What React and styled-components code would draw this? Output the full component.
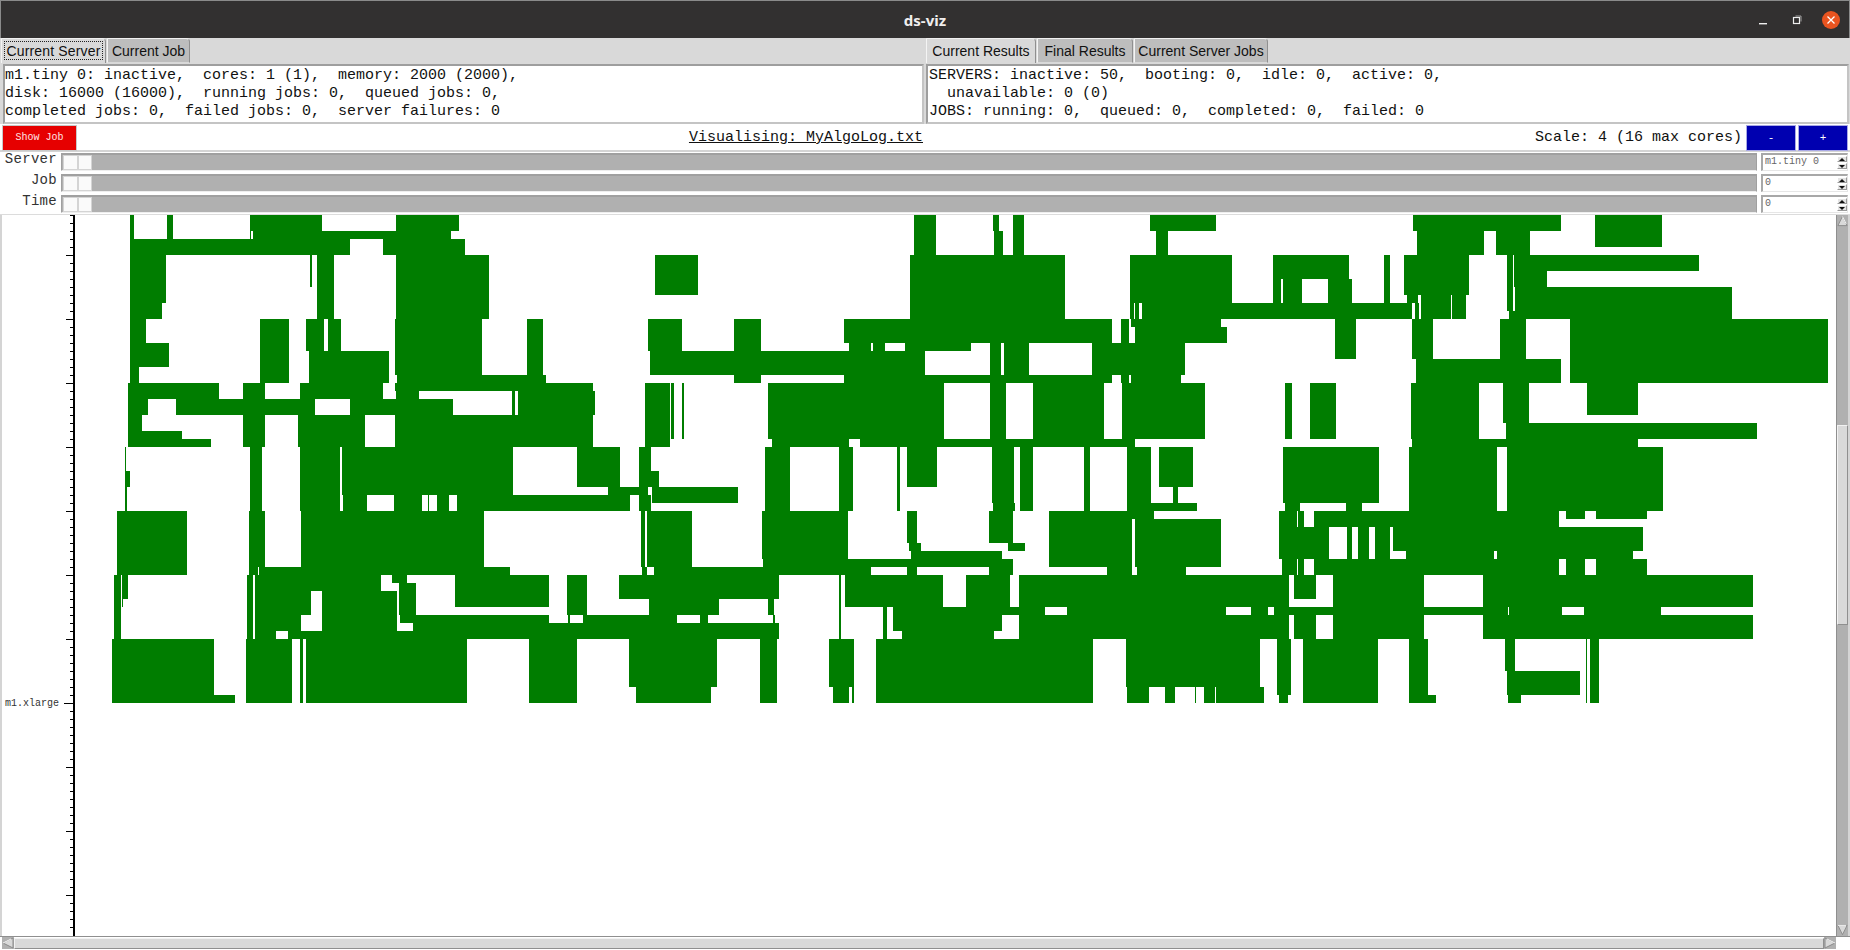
import React from "react";
import styled, { createGlobalStyle } from "styled-components";

const MONO = '"Liberation Mono", monospace';

// job blocks: [first row, last row, x1, x2, x1, x2, ...]
// a row is 8px high, x is measured on a strip 1568 units wide that covers 620px of the page
const STRIP_WIDTH = 620;
const STRIP_UNITS = 1568;
const ROW_H = 8;
const CHART_TOP = 215;

const STRIPS = [
  {
    left: 0,
    bands: [
      [0, 3, 329, 339, 422, 438],
      [0, 2, 632, 814, 1001, 1161],
      [2, 3, 632, 636, 641, 1141],
      [3, 5, 329, 885, 969, 1176],
      [5, 11, 329, 420],
      [5, 9, 785, 789],
      [5, 13, 802, 845, 1001, 1237],
      [11, 13, 329, 410],
      [13, 16, 329, 369],
      [16, 19, 329, 427],
      [19, 21, 329, 352],
      [13, 21, 658, 731],
      [13, 17, 774, 819, 830, 862],
      [17, 21, 781, 984],
      [13, 20, 999, 1219, 1333, 1373],
      [20, 21, 1004, 1381],
      [21, 23, 324, 554, 615, 670, 759, 969],
      [21, 22, 999, 1500],
      [22, 23, 1001, 1060],
      [22, 25, 1296, 1302, 1310, 1505],
      [23, 25, 324, 374, 445, 797, 885, 1146],
      [25, 27, 324, 359],
      [27, 28, 324, 460],
      [28, 29, 324, 534],
      [25, 29, 615, 670, 754, 923, 999, 1500],
      [29, 32, 316, 319],
      [32, 34, 316, 329],
      [34, 37, 316, 321],
      [29, 37, 632, 663, 759, 860],
      [29, 35, 865, 1297],
      [29, 34, 1459, 1568],
      [34, 35, 1538, 1568],
      [35, 37, 867, 928, 996, 1067, 1082, 1085, 1105, 1136, 1156, 1568],
      [37, 45, 296, 473],
      [37, 44, 630, 670, 761, 1224],
      [44, 45, 630, 652, 655, 1290],
      [45, 53, 288, 306, 625, 640],
      [45, 48, 309, 324, 1565, 1568],
      [48, 49, 309, 311],
      [45, 47, 645, 964],
      [45, 46, 991, 1029],
      [46, 50, 1009, 1052],
      [47, 50, 645, 787, 814, 1004],
      [50, 52, 645, 761, 814, 1004],
      [52, 53, 645, 698, 728, 1568],
      [45, 49, 1151, 1388],
      [45, 50, 1434, 1485],
      [50, 51, 1012, 1388, 1436, 1442, 1474, 1568],
      [51, 52, 1044, 1568],
      [53, 61, 283, 541, 622, 738, 759, 766, 774, 1181, 1338, 1459],
      [60, 61, 541, 594],
    ],
  },
  {
    left: 610,
    bands: [
      [0, 5, 769, 824, 1019, 1047],
      [0, 2, 969, 984, 1366, 1533],
      [2, 5, 971, 994, 1381, 1411],
      [5, 10, 114, 223],
      [5, 13, 759, 1151],
      [5, 11, 1315, 1568],
      [11, 13, 1315, 1325, 1328, 1337, 1345, 1568],
      [13, 16, 592, 1270, 1292, 1313],
      [13, 14, 1318, 1545],
      [14, 16, 1328, 1560],
      [13, 17, 96, 182, 314, 382],
      [16, 17, 604, 660, 665, 695, 746, 913],
      [16, 20, 961, 990, 996, 1060, 1219, 1454],
      [17, 20, 101, 797],
      [20, 21, 314, 382, 592, 1270, 1292, 1313, 1318, 1444],
      [21, 28, 154, 162, 182, 187, 400, 845, 961, 1001, 1070, 1249, 1295, 1505],
      [21, 29, 89, 152],
      [28, 29, 410, 604, 632, 1328],
      [29, 34, 0, 25, 751, 827, 1388, 1474],
      [29, 32, 73, 104],
      [32, 34, 73, 124],
      [34, 35, 0, 96],
      [34, 36, 106, 324, 1424, 1436],
      [35, 37, 0, 51, 73, 104],
      [29, 37, 392, 455, 579, 615, 726, 733, 1037, 1070, 1199, 1214],
      [29, 36, 966, 1022, 1308, 1368],
      [36, 37, 969, 1024, 1308, 1485],
      [37, 44, 78, 89, 94, 207],
      [44, 45, 81, 94, 111, 660, 751, 776, 959, 1019, 1257, 1320, 1333, 1457],
      [37, 43, 384, 602],
      [43, 44, 387, 1019],
      [37, 41, 751, 776, 959, 1019],
      [41, 42, 756, 787, 1007, 1050],
      [42, 43, 761, 991],
      [37, 38, 1110, 1376],
      [38, 44, 1110, 1320, 1328, 1545],
      [45, 48, 23, 427],
      [48, 50, 99, 276, 400, 415],
      [50, 51, 0, 169, 228, 248, 413, 417],
      [51, 53, 0, 427],
      [45, 53, 579, 584],
      [45, 49, 594, 842, 900, 1012, 1034, 1568],
      [49, 50, 716, 1100, 1156, 1558],
      [49, 53, 690, 701],
      [50, 52, 716, 991],
      [52, 53, 738, 971],
      [50, 53, 1034, 1568],
      [53, 59, 48, 271, 554, 617, 1305, 1568],
      [59, 61, 66, 255, 564, 604, 612, 617, 1308, 1363, 1404, 1429, 1479, 1482, 1502, 1530, 1533, 1568],
      [53, 61, 379, 422, 673, 1222],
    ],
  },
  {
    left: 1230,
    bands: [
      [0, 2, 463, 837],
      [0, 4, 923, 1093],
      [2, 5, 473, 642, 673, 759],
      [5, 11, 0, 5, 389, 405],
      [5, 8, 109, 301],
      [8, 11, 109, 130, 133, 182, 248, 309],
      [11, 13, 0, 460, 468, 479, 482, 560, 562, 597],
      [5, 10, 440, 604],
      [10, 11, 448, 475, 482, 560, 562, 597],
      [5, 12, 701, 716],
      [5, 7, 718, 1186],
      [7, 9, 718, 802],
      [9, 13, 721, 1270],
      [12, 13, 706, 721],
      [13, 18, 266, 319, 460, 513, 683, 749],
      [13, 21, 860, 1512],
      [18, 21, 470, 837],
      [21, 25, 903, 1032],
      [21, 28, 139, 157, 202, 268, 458, 630],
      [21, 26, 690, 756],
      [26, 28, 698, 1333],
      [28, 29, 460, 1032],
      [29, 36, 134, 377],
      [29, 37, 453, 675, 701, 1095],
      [36, 37, 139, 177, 293, 334],
      [37, 39, 124, 170, 173, 187, 212, 832],
      [37, 38, 850, 898, 926, 1055],
      [39, 43, 124, 250, 296, 309, 324, 352, 367, 405],
      [39, 42, 412, 1044],
      [42, 43, 445, 668, 675, 1019],
      [43, 45, 132, 170, 173, 187, 212, 832, 850, 898, 926, 1055],
      [45, 49, 0, 149, 260, 491, 640, 1323],
      [45, 48, 162, 217],
      [49, 50, 53, 96, 111, 702, 705, 840, 895, 1090],
      [50, 53, 0, 149, 162, 217, 260, 491, 640, 1323],
      [53, 59, 0, 76],
      [59, 61, 0, 86],
      [53, 60, 119, 154],
      [60, 61, 124, 147, 453, 521, 703, 736],
      [53, 61, 185, 374, 453, 501, 900, 903, 910, 933],
      [53, 57, 695, 721],
      [57, 60, 701, 885],
    ],
  },
];

const blocks = STRIPS.flatMap(({ left, bands }) =>
  bands.flatMap(([from, to, ...xs]) => {
    const out = [];
    for (let i = 0; i < xs.length; i += 2) {
      const x1 = Math.round(left + (xs[i] * STRIP_WIDTH) / STRIP_UNITS);
      const x2 = Math.round(left + (xs[i + 1] * STRIP_WIDTH) / STRIP_UNITS);
      out.push({
        x: x1,
        y: CHART_TOP + from * ROW_H,
        width: Math.max(x2 - x1, 1),
        height: (to - from) * ROW_H,
      });
    }
    return out;
  })
);

const ticks = Array.from({ length: 90 }, (_, i) => CHART_TOP + i * ROW_H);

const GlobalStyle = createGlobalStyle`
  html, body {
    margin: 0;
    padding: 0;
    height: 100%;
    overflow: hidden;
    background: #d9d9d9;
  }
  * {
    box-sizing: border-box;
  }
`;

const Window = styled.div`
  width: 1850px;
  height: 950px;
  display: flex;
  flex-direction: column;
  background: #ececec;
`;

const TitleBar = styled.div`
  height: 38px;
  flex: none;
  display: grid;
  grid-template-columns: 1fr auto 1fr;
  align-items: center;
  background: #323030;
  border-top: 1px solid #8a8a8a;
  border-left: 1px solid #8a8a8a;
  border-right: 1px solid #8a8a8a;
`;

const Title = styled.div`
  grid-column: 2;
  font: bold 15px "Noto Sans", "Open Sans", sans-serif;
  color: #f0eeee;
`;

const WindowButtons = styled.div`
  grid-column: 3;
  justify-self: end;
  display: flex;
  padding-right: 1px;
`;

const WindowButton = styled.div`
  width: 34px;
  height: 20px;
  display: flex;
  align-items: center;
  justify-content: center;
`;

const Tabbed = styled.div`
  display: grid;
  grid-template-columns: 925px 925px;
  flex: none;
  background: #d9d9d9;
`;

const TabColumn = styled.div`
  display: flex;
  flex-direction: column;
  padding-left: 1px;
`;

const TabRow = styled.div`
  height: 25px;
  display: flex;
  align-items: flex-end;
  gap: 1px;
`;

const Tab = styled.div`
  width: ${(p) => p.$w}px;
  height: 25px;
  display: flex;
  align-items: center;
  justify-content: center;
  font: 14px "Liberation Sans", Arial, sans-serif;
  letter-spacing: ${(p) => (p.$focus ? "0.15px" : "0")};
  color: #111;
  white-space: nowrap;
  background: ${(p) => (p.$active ? "#d9d9d9" : "#bdbdbd")};
  border: 1px solid #8f8f8f;
  border-bottom: ${(p) => (p.$active ? "none" : "1px solid #d9d9d9")};
  border-left-color: #f4f4f4;
  border-top-color: #f0f0f0;
  border-top-right-radius: 4px;
  outline: ${(p) => (p.$focus ? "1px dotted #222" : "none")};
  outline-offset: -4px;
`;

const InfoBox = styled.pre`
  margin: 1px 1px 0 ${(p) => (p.$right ? "0" : "2px")};
  height: 60px;
  padding: 1px 0 0 ${(p) => (p.$right ? "1px" : "0")};
  background: #fff;
  border: 2px solid #c4c4c4;
  border-top-color: #9e9e9e;
  border-left-color: #9e9e9e;
  font: 15px/18px ${MONO};
  color: #111;
  overflow: hidden;
`;

const ControlBar = styled.div`
  height: 28px;
  flex: none;
  display: flex;
  align-items: center;
  justify-content: space-between;
  padding: 1px 2px 0 2px;
  background: #fff;
  border-bottom: 2px solid #d4d4d4;
`;

const ShowJob = styled.div`
  width: 75px;
  height: 26px;
  display: flex;
  align-items: center;
  justify-content: center;
  font: 10px ${MONO};
  color: #ffe6e6;
  background: #e60000;
  border: 1px solid #c9c9c9;
`;

const Visualising = styled.div`
  font: 15px ${MONO};
  color: #111;
  text-decoration: underline;
`;

const ScaleGroup = styled.div`
  display: flex;
  align-items: center;
  gap: 4px;
  font: 15px ${MONO};
  color: #111;
`;

const ScaleButtons = styled.div`
  display: flex;
  gap: 2px;
`;

const ScaleButton = styled.div`
  width: 50px;
  height: 26px;
  display: flex;
  align-items: center;
  justify-content: center;
  font: 11px ${MONO};
  color: #fff;
  background: #0000b0;
  border: 1px solid #a9a9e6;
`;

const SliderGroup = styled.div`
  height: 63px;
  flex: none;
  display: grid;
  grid-template-rows: 21px 21px 20px;
  background: #fff;
  border-bottom: 1px solid #dcdcdc;
`;

const SliderRow = styled.div`
  display: grid;
  grid-template-columns: 61px 1696px 1fr;
  align-items: start;
  padding-top: 1px;
`;

const SliderLabel = styled.div`
  font: 14px/16px ${MONO};
  letter-spacing: 0.3px;
  color: #333;
  text-align: right;
  padding-right: 4px;
  margin-top: -2px;
`;

const Track = styled.div`
  height: 18px;
  display: flex;
  align-items: center;
  padding-left: 1px;
  background: #b0b0b0;
  border: 1px solid #a0a0a0;
  border-top-width: 2px;
  border-bottom-color: #eee;
`;

const Thumb = styled.div`
  width: ${(p) => p.$w}px;
  height: 15px;
  background: #fafafa;
  border: 1px solid #d4d4d4;
`;

const Spinner = styled.div`
  margin: 0 2px 0 4px;
  height: 18px;
  display: flex;
  align-items: flex-start;
  justify-content: space-between;
  padding: 1px 0 0 2px;
  background: #fff;
  border: 1px solid #e6e6e6;
  border-top: 2px solid #a8a8a8;
  border-left: 2px solid #a8a8a8;
  font: 10px ${MONO};
  color: #666;
`;

const SpinArrows = styled.div`
  width: 10px;
  display: flex;
  flex-direction: column;
  gap: 1px;
`;

const SpinArrow = styled.div`
  height: 6px;
  display: flex;
  align-items: center;
  justify-content: center;
  background: #e4e4e4;
  border: 1px solid #9a9a9a;
  border-top-color: #fff;
  border-left-color: #fff;

  &::after {
    content: "";
    border-left: 3px solid transparent;
    border-right: 3px solid transparent;
    ${(p) => (p.$down ? "border-top: 3px solid #111;" : "border-bottom: 3px solid #111;")}
  }
`;

const ChartArea = styled.div`
  flex: 1;
  min-height: 0;
  display: grid;
  grid-template-columns: 1fr 12px;
  padding-left: 2px;
  padding-right: 2px;
  background: #d4d4d4;
`;

const Chart = styled.svg`
  display: block;
  width: 1834px;
  height: 721px;
  background: #fff;
`;

const VScroll = styled.div`
  width: 12px;
  height: 721px;
  display: flex;
  flex-direction: column;
  background: #b0b0b0;
  border-left: 1px solid #8f8f8f;
`;

const VThumb = styled.div`
  height: 200px;
  margin-top: 198px;
  background: #d9d9d9;
  border: 1px solid #f2f2f2;
  border-bottom-color: #8f8f8f;
  border-right-color: #8f8f8f;
`;

const ScrollSpacer = styled.div`
  flex: 1;
`;

const ArrowIcon = styled.svg`
  display: block;
  flex: none;
`;

const HScroll = styled.div`
  height: 14px;
  flex: none;
  display: flex;
  align-items: center;
  padding: 0 14px 1px 2px;
  background: #fff;
  border-top: 1px solid #8f8f8f;
`;

const HThumb = styled.div`
  flex: 1;
  height: 11px;
  background: #d9d9d9;
  border: 1px solid #f2f2f2;
  border-bottom-color: #8f8f8f;
  border-right-color: #8f8f8f;
`;

const ScrollArrow = ({ points, w = 12, h = 12 }) => (
  <ArrowIcon width={w} height={h} viewBox="0 0 12 12">
    <rect width="12" height="12" fill="#b0b0b0" />
    <polygon points={points} fill="#d9d9d9" stroke="#8a8a8a" strokeWidth="1" />
    <polyline points={points} fill="none" stroke="#fafafa" strokeWidth="1" strokeDasharray="9 30" />
  </ArrowIcon>
);

const Slider = ({ label, value }) => (
  <SliderRow>
    <SliderLabel>{label}</SliderLabel>
    <Track>
      <Thumb $w={15} />
      <Thumb $w={14} />
    </Track>
    <Spinner>
      <span>{value}</span>
      <SpinArrows>
        <SpinArrow />
        <SpinArrow $down />
      </SpinArrows>
    </Spinner>
  </SliderRow>
);

const App = () => (
  <Window>
    <GlobalStyle />
    <TitleBar>
      <Title>ds-viz</Title>
      <WindowButtons>
        <WindowButton>
          <svg width="10" height="10" viewBox="0 0 10 10">
            <rect x="1" y="8" width="8" height="1.4" fill="#eee" />
          </svg>
        </WindowButton>
        <WindowButton>
          <svg width="10" height="10" viewBox="0 0 10 10">
            <rect x="1.5" y="2.5" width="6" height="6" fill="none" stroke="#eee" strokeWidth="1.2" />
            <path d="M3.5 1H9V6.5" fill="none" stroke="#bbb" strokeWidth="0.8" />
          </svg>
        </WindowButton>
        <WindowButton>
          <svg width="20" height="20" viewBox="0 0 20 20">
            <circle cx="10" cy="10" r="9" fill="#e95420" />
            <path d="M6.5 6.5L13.5 13.5M13.5 6.5L6.5 13.5" stroke="#fff" strokeWidth="1.3" />
          </svg>
        </WindowButton>
      </WindowButtons>
    </TitleBar>

    <Tabbed>
      <TabColumn>
        <TabRow>
          <Tab $active $focus $w={105}>Current Server</Tab>
          <Tab $w={83}>Current Job</Tab>
        </TabRow>
        <InfoBox>{`m1.tiny 0: inactive,  cores: 1 (1),  memory: 2000 (2000),
disk: 16000 (16000),  running jobs: 0,  queued jobs: 0,
completed jobs: 0,  failed jobs: 0,  server failures: 0`}</InfoBox>
      </TabColumn>
      <TabColumn $right>
        <TabRow>
          <Tab $active $w={110}>Current Results</Tab>
          <Tab $w={96}>Final Results</Tab>
          <Tab $w={134}>Current Server Jobs</Tab>
        </TabRow>
        <InfoBox $right>{`SERVERS: inactive: 50,  booting: 0,  idle: 0,  active: 0,
  unavailable: 0 (0)
JOBS: running: 0,  queued: 0,  completed: 0,  failed: 0`}</InfoBox>
      </TabColumn>
    </Tabbed>

    <ControlBar>
      <ShowJob>Show Job</ShowJob>
      <Visualising>Visualising: MyAlgoLog.txt</Visualising>
      <ScaleGroup>
        <span>Scale: 4 (16 max cores)</span>
        <ScaleButtons>
          <ScaleButton>-</ScaleButton>
          <ScaleButton>+</ScaleButton>
        </ScaleButtons>
      </ScaleGroup>
    </ControlBar>

    <SliderGroup>
      <Slider label="Server" value="m1.tiny 0" />
      <Slider label="Job" value="0" />
      <Slider label="Time" value="0" />
    </SliderGroup>

    <ChartArea>
      <Chart viewBox="2 215 1834 721" shapeRendering="crispEdges">
        {ticks.map((y) => {
          const major = (y - 255) % 64 === 0;
          const named = y === 703;
          const x = named ? 64 : major ? 66 : 70;
          return <rect key={y} x={x} y={y} width={73 - x} height="1" fill="#000" />;
        })}
        <rect x="73" y="215" width="2" height="721" fill="#000" />
        {blocks.map((b, i) => (
          <rect key={i} {...b} fill="#007d00" />
        ))}
        <text x="5" y="706" fontFamily="Liberation Mono, monospace" fontSize="10" fill="#333">
          m1.xlarge
        </text>
      </Chart>
      <VScroll>
        <ScrollArrow points="6,1 11,11 1,11" w={11} />
        <VThumb />
        <ScrollSpacer />
        <ScrollArrow points="1,1 11,1 6,11" w={11} />
      </VScroll>
    </ChartArea>

    <HScroll>
      <ScrollArrow points="1,6 11,1 11,11" />
      <HThumb />
      <ScrollArrow points="11,6 1,1 1,11" />
    </HScroll>
  </Window>
);

export default App;
